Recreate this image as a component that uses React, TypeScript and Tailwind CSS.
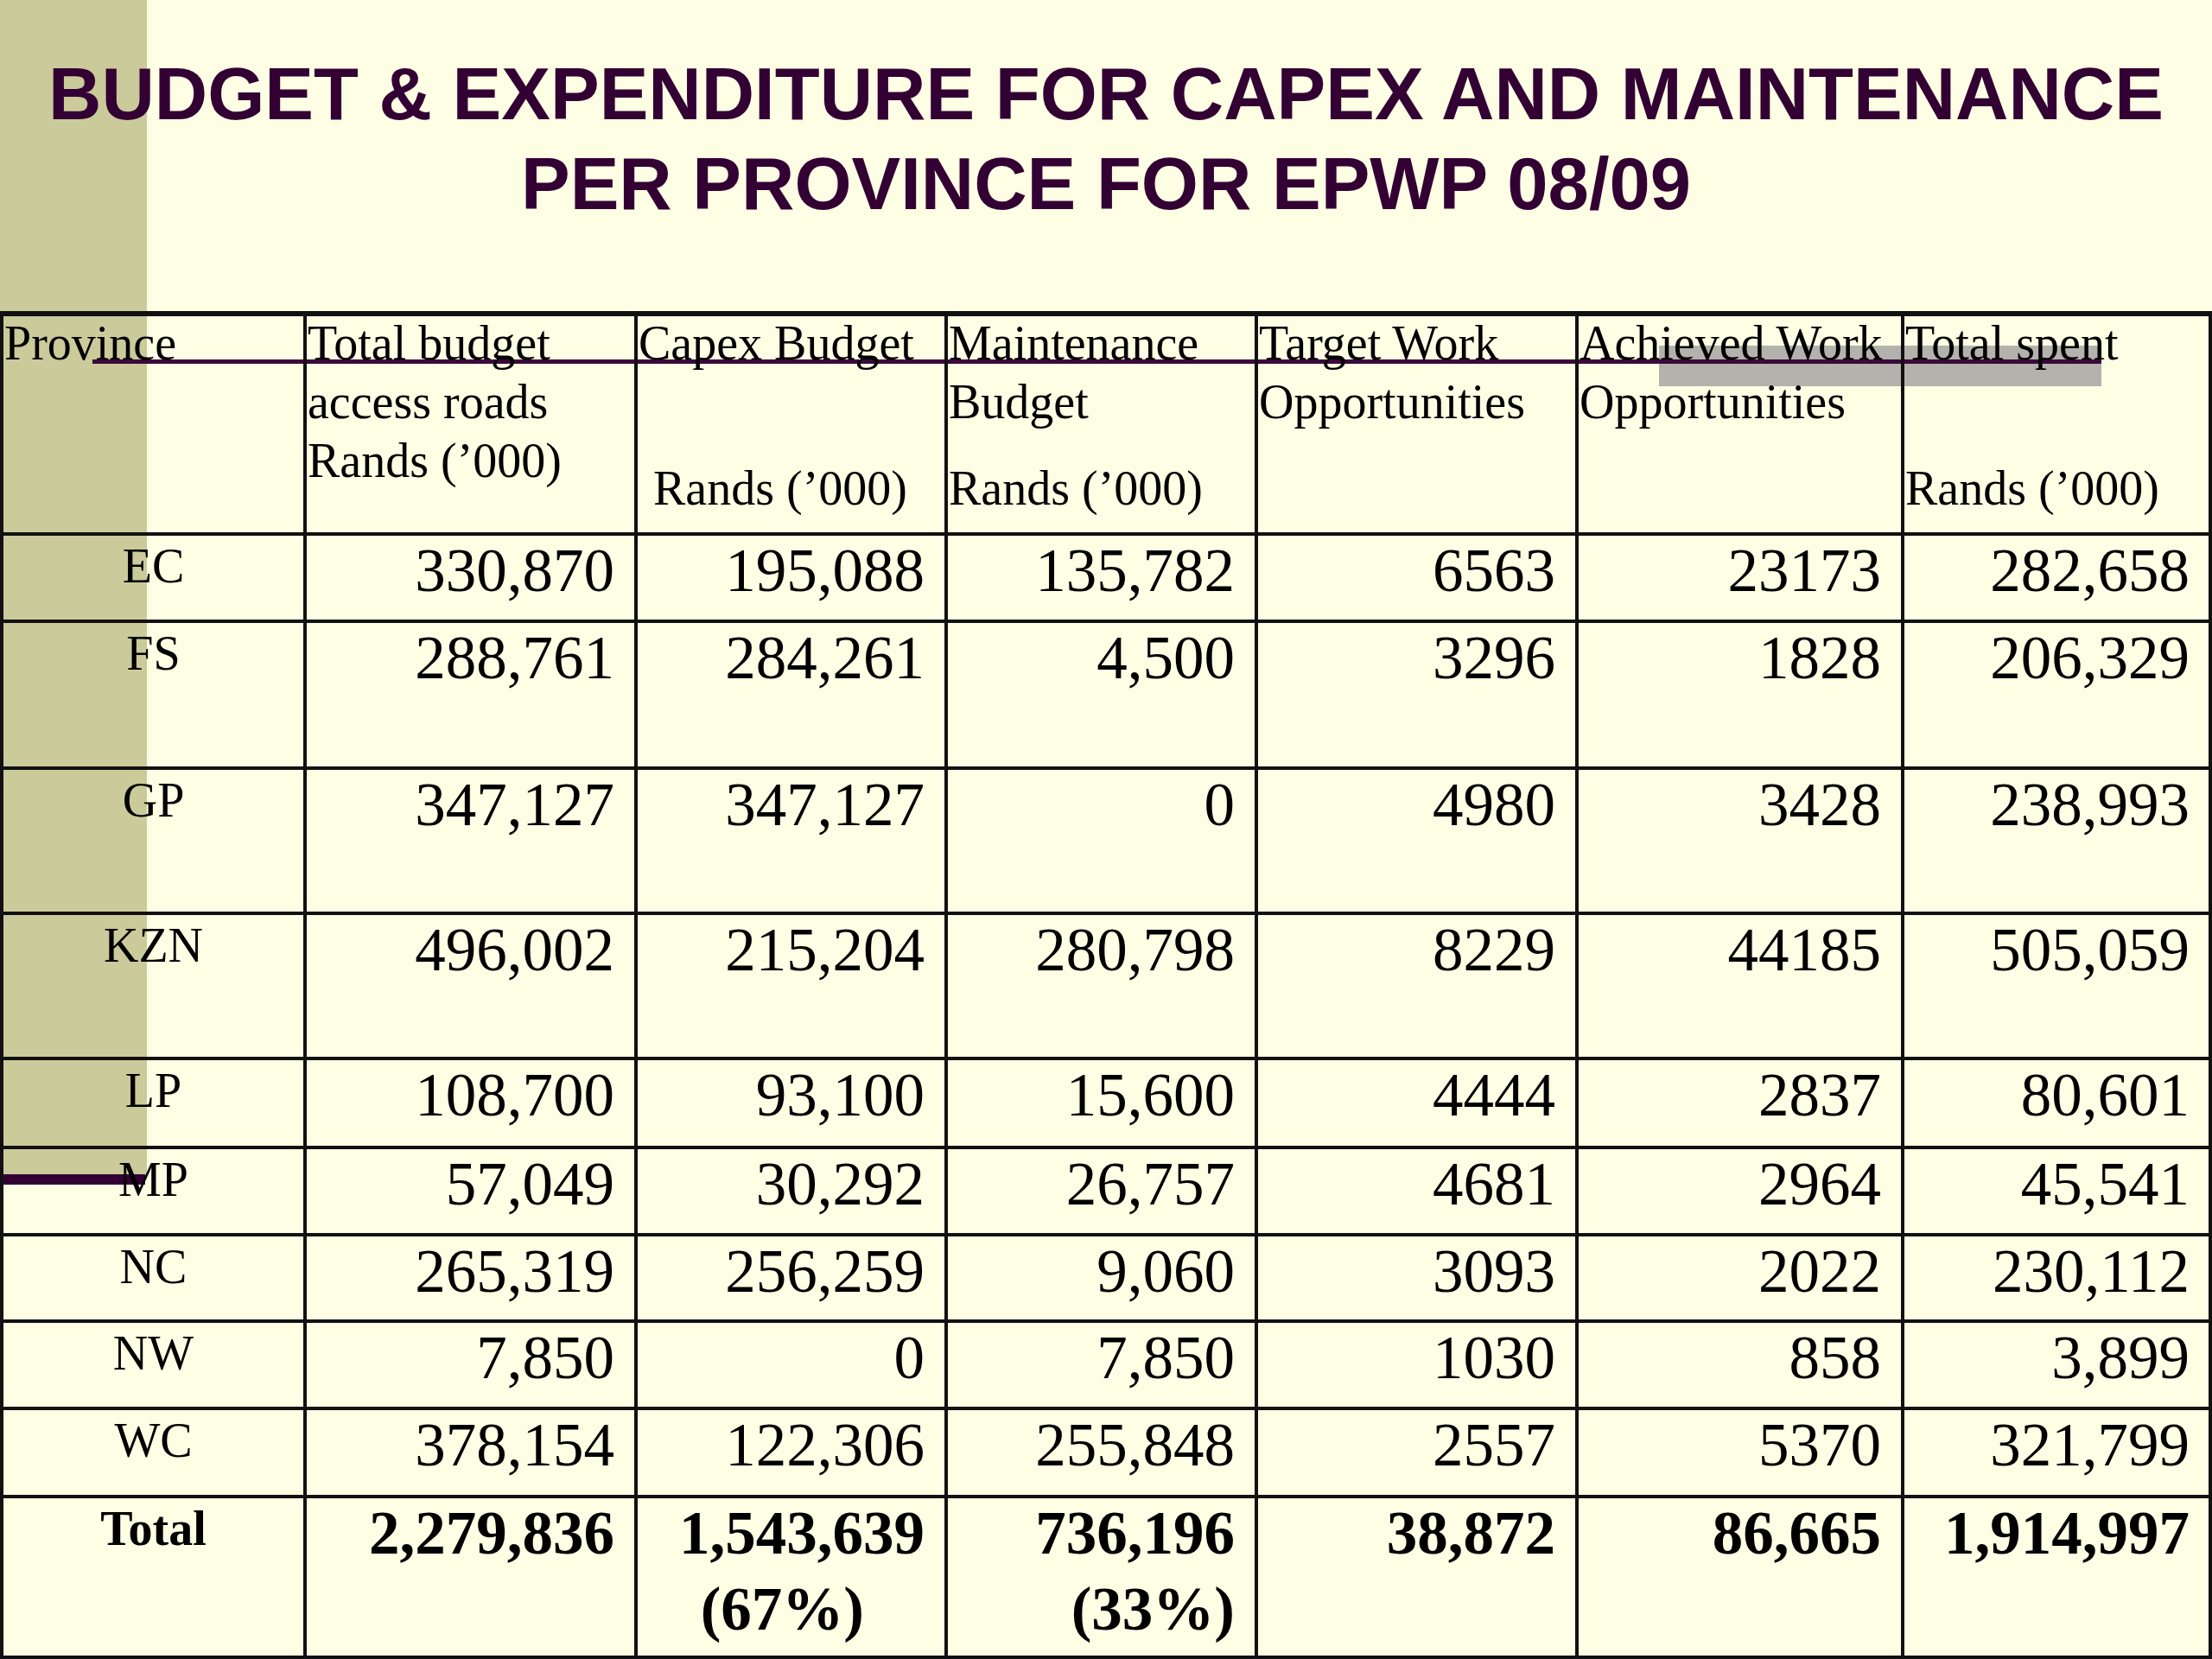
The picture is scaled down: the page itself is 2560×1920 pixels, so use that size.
import React from "react";

const rows: { p: string; v: string[] }[] = [
  { p: "EC", v: ["330,870", "195,088", "135,782", "6563", "23173", "282,658"] },
  { p: "FS", v: ["288,761", "284,261", "4,500", "3296", "1828", "206,329"] },
  { p: "GP", v: ["347,127", "347,127", "0", "4980", "3428", "238,993"] },
  { p: "KZN", v: ["496,002", "215,204", "280,798", "8229", "44185", "505,059"] },
  { p: "LP", v: ["108,700", "93,100", "15,600", "4444", "2837", "80,601"] },
  { p: "MP", v: ["57,049", "30,292", "26,757", "4681", "2964", "45,541"] },
  { p: "NC", v: ["265,319", "256,259", "9,060", "3093", "2022", "230,112"] },
  { p: "NW", v: ["7,850", "0", "7,850", "1030", "858", "3,899"] },
  { p: "WC", v: ["378,154", "122,306", "255,848", "2557", "5370", "321,799"] },
];

const cell = "border-l-[4px] border-t-[4px] border-[#111]";
const head = "border-l-[4px] border-t-[6px] border-[#111] text-[56px] leading-[68px] text-black";
const num = `${cell} pt-[5px] pr-[23px] text-right text-[71px] leading-[71px]`;
const lab = `${cell} pt-[7px] text-center text-[56px] leading-[56px]`;

export default function App() {
  return (
    <div className="relative w-[2560px] h-[1920px] overflow-hidden bg-[#fefee4]">
      {/* decorative background shapes */}
      <div className="absolute left-0 top-0 w-[170px] h-[1360px] bg-[#cbca9b]" />
      <div className="absolute left-0 top-[1359px] w-[168px] h-[12px] bg-[#330033]" />
      <div className="absolute left-[1920px] top-[400px] w-[512px] h-[47px] bg-[#b3b2ac]" />
      <div className="absolute left-[107px] top-[416px] w-[2325px] h-[5px] bg-[#3b0a3b]" />

      <div className="relative z-10 flex flex-col">
        <div
          className="h-[360px] pt-[57px] text-center text-[85px] leading-[104px] font-bold text-[#330033]"
          style={{ fontFamily: '"Liberation Sans", Arial, sans-serif' }}
        >
          <div>BUDGET &amp; EXPENDITURE FOR CAPEX AND MAINTENANCE</div>
          <div>PER PROVINCE FOR EPWP 08/09</div>
        </div>

        <div
          className="grid grid-cols-[351px_383px_359px_359px_371px_377px_357px] grid-rows-[256px_101px_170px_168px_168px_103px_101px_100px_101px_102px_186px] border-r-[4px] border-b-[4px] border-[#111] text-black"
          style={{ fontFamily: '"Liberation Serif", "Times New Roman", serif' }}
        >
          {/* header */}
          <div className={`${head} pl-[1px]`}>
            <div className="-mt-[3px]">Province</div>
          </div>
          <div className={`${head} pl-[1px]`}>
            <div className="-mt-[3px]">Total budget</div>
            <div>access roads</div>
            <div>Rands (’000)</div>
          </div>
          <div className={`${head} pl-[1px]`}>
            <div className="-mt-[3px]">Capex Budget</div>
            <div className="mt-[100px] pl-[17px]">Rands (’000)</div>
          </div>
          <div className={`${head} pl-[1px]`}>
            <div className="-mt-[3px]">Maintenance</div>
            <div>Budget</div>
            <div className="mt-[32px]">Rands (’000)</div>
          </div>
          <div className={`${head} pl-[1px]`}>
            <div className="-mt-[3px]">Target Work</div>
            <div>Opportunities</div>
          </div>
          <div className={`${head} pl-[1px]`}>
            <div className="-mt-[3px] whitespace-nowrap">Achieved Work</div>
            <div>Opportunities</div>
          </div>
          <div className={`${head} pl-[1px]`}>
            <div className="-mt-[3px]">Total spent</div>
            <div className="mt-[100px]">Rands (’000)</div>
          </div>

          {rows.map((r) => (
            <React.Fragment key={r.p}>
              <div className={lab}>{r.p}</div>
              {r.v.map((n, i) => (
                <div key={i} className={num}>
                  {n}
                </div>
              ))}
            </React.Fragment>
          ))}

          {/* total row */}
          <div className={`${lab} font-bold`}>Total</div>
          <div className={`${num} font-bold`}>2,279,836</div>
          <div className={`${num} font-bold`}>
            <div>1,543,639</div>
            <div className="mt-[17px] pr-[70px]">(67%)</div>
          </div>
          <div className={`${num} font-bold`}>
            <div>736,196</div>
            <div className="mt-[17px]">(33%)</div>
          </div>
          <div className={`${num} font-bold`}>38,872</div>
          <div className={`${num} font-bold`}>86,665</div>
          <div className={`${num} font-bold`}>1,914,997</div>
        </div>
      </div>
    </div>
  );
}
